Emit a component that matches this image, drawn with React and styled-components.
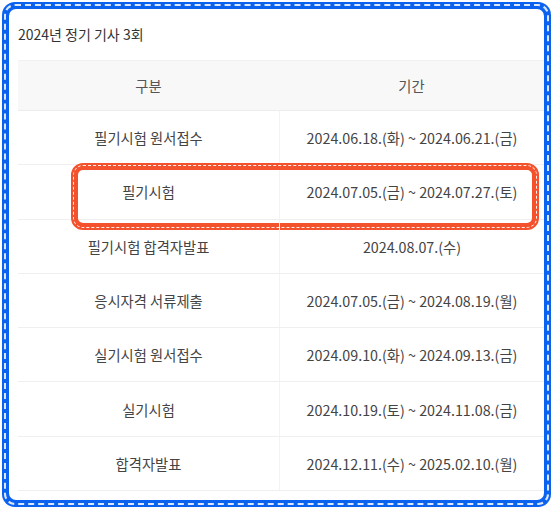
import React from 'react'
import styled, { createGlobalStyle } from 'styled-components'

const rows = [
  ['필기시험 원서접수', '2024.06.18.(화) ~ 2024.06.21.(금)'],
  ['필기시험', '2024.07.05.(금) ~ 2024.07.27.(토)', true],
  ['필기시험 합격자발표', '2024.08.07.(수)'],
  ['응시자격 서류제출', '2024.07.05.(금) ~ 2024.08.19.(월)'],
  ['실기시험 원서접수', '2024.09.10.(화) ~ 2024.09.13.(금)'],
  ['실기시험', '2024.10.19.(토) ~ 2024.11.08.(금)'],
  ['합격자발표', '2024.12.11.(수) ~ 2025.02.10.(월)'],
]

const App = () => {
  return (
    <>
      <GlobalStyle />
      <Frame>
        <Dashed>
          <Content>
            <Title>2024년 정기 기사 3회</Title>
            <Table>
              <HeadRow>
                <HeadCell>구분</HeadCell>
                <HeadCell>기간</HeadCell>
              </HeadRow>
              {rows.map(([name, period, mark]) => (
                <Row key={name}>
                  <Cell>{name}</Cell>
                  <Cell divider>{period}</Cell>
                  {mark && <Highlight />}
                </Row>
              ))}
            </Table>
          </Content>
        </Dashed>
      </Frame>
    </>
  )
}

const GlobalStyle = createGlobalStyle`
  body {
    margin: 0;
    background: #fff;
    font-family: "Noto Sans CJK KR", "Noto Sans", sans-serif;
  }
`;

const Frame = styled.div`
  box-sizing: border-box;
  margin: 2px;
  width: 549px;
  height: 505px;
  padding: 2px;
  background: #0b62ef;
  border-radius: 13px;
`;

const Dashed = styled.div`
  box-sizing: border-box;
  height: 100%;
  padding: 3px;
  border: 2px dashed rgba(255, 255, 255, 0.85);
  border-radius: 11px;
`;

const Content = styled.div`
  box-sizing: border-box;
  height: 100%;
  padding-left: 9px;
  background: #fff;
  border-radius: 7px;
  overflow: hidden;
`;

const Title = styled.div`
  height: 51px;
  display: flex;
  align-items: center;
  padding-bottom: 2px;
  box-sizing: border-box;
  font-size: 14px;
  color: #333;
`;

const Table = styled.div`
  display: flex;
  flex-direction: column;
`;

const HeadRow = styled.div`
  display: grid;
  grid-template-columns: 261px 1fr;
  height: 51px;
  background: #f8f8f8;
  border-top: 1px solid #f1f1f1;
  border-bottom: 1px solid #ececec;
  box-sizing: border-box;
`;

const HeadCell = styled.div`
  display: flex;
  align-items: center;
  justify-content: center;
  font-size: 14.3px;
  color: #555;
`;

const Row = styled.div`
  position: relative;
  display: grid;
  grid-template-columns: 261px 1fr;
  height: 54.3px;
  border-bottom: 1px solid #efefef;
  box-sizing: border-box;
`;

const Cell = styled.div`
  display: flex;
  align-items: center;
  justify-content: center;
  font-size: 14.3px;
  color: #444;
  border-left: ${(p) => (p.divider ? '1px solid #f3f3f3' : 'none')};
`;

const Highlight = styled.div`
  position: absolute;
  left: 53px;
  right: 5px;
  top: -2px;
  bottom: -11px;
  border: 7px solid #f4522d;
  border-radius: 12px;
  pointer-events: none;
  &::after {
    content: '';
    position: absolute;
    inset: -5px;
    border: 1.5px dashed rgba(255, 255, 255, 0.9);
    border-radius: 10px;
  }
`;

export default App
